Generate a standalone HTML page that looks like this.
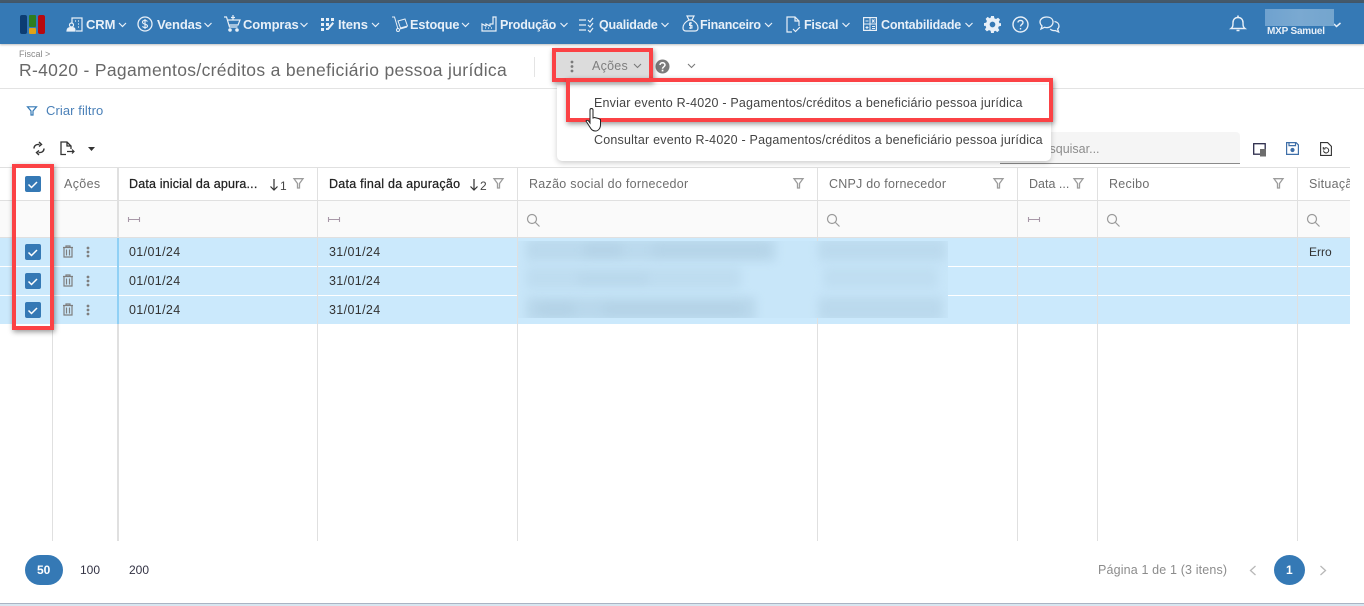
<!DOCTYPE html>
<html lang="pt-BR"><head><meta charset="utf-8"><title>R-4020</title>
<style>
*{box-sizing:border-box}
html,body{margin:0;padding:0;width:1364px;height:606px;overflow:hidden;background:#fff;font-family:"Liberation Sans",Arial,sans-serif}
.a{position:absolute}
.t{position:absolute;white-space:nowrap;line-height:16px}
.n{color:#e8f0f8;font-size:13px;font-weight:bold;top:17px;letter-spacing:-.1px}
.h{font-size:12.5px;color:#6e6e6e;top:176px;letter-spacing:.28px}
.d{font-size:12.500px;color:#333;letter-spacing:.36px}
.v{position:absolute;top:168px;height:373px;width:1px;background:#e0e0e0}
.hl{position:absolute;left:0;width:1350px;height:1px;background:#e0e0e0}
.row{position:absolute;left:0;width:1350px;height:28px;background:#cbe9fc}
.cb{position:absolute;left:25px;width:16px;height:16px;border-radius:2px;background:#3579b5}
.bl{position:absolute;background:#b0cfe3;filter:blur(5px)}
svg{position:absolute;overflow:visible}
.red{position:absolute;border:4px solid #fb4245;box-shadow:1px 2px 5px rgba(0,0,0,.4)}
</style></head><body>

<!-- top bar -->
<div class="a" style="left:0;top:0;width:1364px;height:4px;background:#44596a"></div>
<div class="a" style="left:0;top:3px;width:1364px;height:41px;background:#3579b5;box-shadow:0 1px 2px rgba(0,0,0,.25)"></div>
<!-- logo -->
<div class="a" style="left:20px;top:15px;width:7px;height:19px;background:#0c3d73;border-radius:2px"></div>
<div class="a" style="left:29px;top:15px;width:7px;height:12px;background:#2e7d1e;border-radius:1px"></div>
<div class="a" style="left:29px;top:28px;width:7px;height:6px;background:#dfa218;border-radius:1px"></div>
<div class="a" style="left:38px;top:15px;width:7px;height:19px;background:#b8090f;border-radius:2px"></div>

<!-- nav icons -->
<svg style="left:67px;top:17px" width="16" height="15" fill="none" stroke="#e8f0f8" stroke-width="1.2"><path d="M5 6V1h10v13H9M8 4h1M11 4h1M11 7h1M11 10h1"/><circle cx="4.500" cy="8" r="2"/><path d="M0 14c0-3 2-3.500 4.500-3.500S8 11 8 14z" fill="#e8f0f8"/></svg>
<svg style="left:137px;top:16px" width="16" height="16" fill="none" stroke="#e8f0f8" stroke-width="1.300"><circle cx="8" cy="8" r="7"/><path d="M10.500 5.500C9.500 4 5.500 4 5.500 6.200S10.500 8 10.500 10s-4 2-5 .3M8 3v10" stroke-width="1.100"/></svg>
<svg style="left:224px;top:15px" width="17" height="17" fill="none" stroke="#e8f0f8" stroke-width="1.200"><path d="M0 2h2.500l3 10h8M4 5h12l-2 5H5.500M9 0v5M7 2.500h4"/><circle cx="6" cy="15" r="1.200" fill="#e8f0f8"/><circle cx="13" cy="15" r="1.200" fill="#e8f0f8"/></svg>
<svg style="left:321px;top:18px" width="13" height="13" fill="#e8f0f8"><path d="M0 0h3v3H0zM5 0h3v3H5zM10 0h3v3h-3zM0 5h3v3H0zM5 5h3v3H5zM0 10h3v3H0zM5 10h1.500l5-6 1.500 1.500-5.500 6.500H5z"/></svg>
<svg style="left:392px;top:16px" width="16" height="16" fill="none" stroke="#e8f0f8" stroke-width="1"><path d="M0 1h2.500L6 13"/><circle cx="6" cy="14" r="1.500"/><path d="M6 5l7-2 2.500 7-7 2zM8 13l7-2"/></svg>
<svg style="left:481px;top:16px" width="16" height="16" fill="none" stroke="#e8f0f8" stroke-width="1.200"><path d="M1 15V8l4 2V8l4 2V8l3 0V1h3v14zM4 12h1M7 12h1M10 12h1"/></svg>
<svg style="left:579px;top:17px" width="16" height="16" fill="none" stroke="#e8f0f8" stroke-width="1.200"><path d="M0 3h7M0 8h7M0 13h7M9 3l2 2 3-4M9 8l2 2 3-4M9 13l2 2 3-4"/></svg>
<svg style="left:682px;top:15px" width="17" height="17" fill="none" stroke="#e8f0f8" stroke-width="1.200"><path d="M5 1h7l-2 4H7zM7 5C3 7 1 10 1 13c0 2 1 3 3 3h9c2 0 3-1 3-3 0-3-2-6-6-8"/><path d="M10 8H7.500v2.500H10V13H7M8.700 7v7" stroke-width="1"/></svg>
<svg style="left:786px;top:16px" width="15" height="17" fill="none" stroke="#e8f0f8" stroke-width="1.200"><path d="M6 16H1V1h8l4 4v5M9 1v4h4M7 13l2.500 2.500L14 11"/></svg>
<svg style="left:863px;top:17px" width="14" height="14" fill="none" stroke="#e8f0f8" stroke-width="1.200"><rect x=".6" y=".6" width="12.800" height="12.800"/><path d="M.6 7h12.800M7 .6v12.800M2.500 4h3M9 2.500l2.500 3M11.500 2.500l-2.500 3M2.500 10.500h3M4 9v3M9 9.500h3M9 11.500h3" stroke-width="1"/></svg>

<!-- nav text -->
<span class="t n" style="left:86px">CRM</span>
<span class="t n" style="left:157px">Vendas</span>
<span class="t n" style="left:243px">Compras</span>
<span class="t n" style="left:338px">Itens</span>
<span class="t n" style="left:410px;font-size:12.700px">Estoque</span>
<span class="t n" style="left:500px;font-size:12.500px;letter-spacing:-.2px">Produção</span>
<span class="t n" style="left:599px;font-size:12.500px;letter-spacing:-.2px">Qualidade</span>
<span class="t n" style="left:700px;font-size:12.500px;letter-spacing:-.25px">Financeiro</span>
<span class="t n" style="left:804px;font-size:12.500px;letter-spacing:-.2px">Fiscal</span>
<span class="t n" style="left:881px;font-size:12.500px;letter-spacing:-.2px">Contabilidade</span>

<!-- nav chevrons -->
<svg style="left:0;top:0" width="1364" height="44" fill="none" stroke="#e8f0f8" stroke-width="1.200">
<path d="M119 23l3.500 3.500L126 23M204.500 23l3.500 3.500L211.500 23M300.500 23l3.500 3.500L307.500 23M372 23l3.500 3.500L379 23M462 23l3.500 3.500L469 23M560.500 23l3.500 3.500L567.500 23M661.500 23l3.500 3.500L668.500 23M765 23l3.500 3.500L772 23M842.500 23l3.500 3.500L849.500 23M965.500 23l3.500 3.500L972.500 23"/>
<path d="M1334 24l2.500 2.500L1340.500 23" stroke-width="1.500"/>
</svg>

<!-- gear, help, chat -->
<svg style="left:984px;top:16px" width="17" height="17" viewBox="0 0 24 24" fill="#e8f0f8"><path fill-rule="evenodd" d="M10 0h4l.7 3.300 2.300 1 2.900-1.800 2.800 2.800L20.900 8l1 2.300L24 10v4l-3.100.7-1 2.300 1.800 2.900-2.800 2.800L16 20.900l-2 1L14 24h-4l-.7-3.100-2.300-1-2.900 1.800-2.800-2.800L3.100 16l-1-2.300L0 14v-4l3.100-.7 1-2.300-1.800-2.900 2.800-2.800L8 3.100l1.300-.6zM12 8a4 4 0 1 0 0 8 4 4 0 0 0 0-8z"/></svg>
<svg style="left:1012px;top:16px" width="17" height="17" fill="none" stroke="#e8f0f8" stroke-width="1.400"><circle cx="8.500" cy="8.500" r="7.500"/><path d="M6 6.500C6 3.800 11 3.800 11 6.500 11 8.500 8.500 8.300 8.500 10.500"/><path d="M8.500 12v1.500"/></svg>
<svg style="left:1039px;top:16px" width="21" height="17" fill="none" stroke="#e8f0f8" stroke-width="1.300"><path d="M7.500 1C3.500 1 1 3.300 1 6c0 1.700 1 3 2 4l-1 3 3.500-1.700c.6.200 1.300.300 2 .300 4 0 6.500-2.500 6.500-5.600S11.500 1 7.500 1z"/><path d="M15.500 5.500c2.700.4 4.500 2.200 4.500 4.500 0 1.200-.5 2.200-1.400 3l1 3-3.400-1.500c-2 .3-4-.3-5-1.500"/></svg>
<!-- bell -->
<svg style="left:1230px;top:15px" width="16" height="18" fill="none" stroke="#e8f0f8" stroke-width="1.400"><path d="M1 13.500h14c-2-1.500-2-3-2-6 0-3-2-5-5-5s-5 2-5 5c0 3 0 4.500-2 6z"/><path d="M8 .5v2M6.500 15.500h3" stroke-width="1.600"/></svg>
<!-- user -->
<div class="a" style="left:1265px;top:9px;width:69px;height:17px;background:linear-gradient(90deg,#6fa2cf,#7aa9d1 50%,#74a5ce)"></div>
<span class="t" style="left:1267px;top:24px;color:#e8f0f8;font-size:10px;font-weight:bold;letter-spacing:-.2px">MXP Samuel</span>

<!-- page header -->
<span class="t" style="left:19px;top:48px;font-size:9px;color:#888;line-height:12px">Fiscal &gt;</span>
<span class="t" style="left:19px;top:59px;font-size:17.500px;color:#686868;line-height:22px;letter-spacing:.325px">R-4020 - Pagamentos/créditos a beneficiário pessoa jurídica</span>
<div class="a" style="left:534px;top:57px;width:1px;height:20px;background:#e4e4e4"></div>
<div class="a" style="left:0;top:88px;width:1364px;height:1px;background:#e3e3e3"></div>

<!-- acoes button -->
<div class="a" style="left:555px;top:52px;width:95px;height:26px;background:#dcdcdc"></div>
<svg style="left:570px;top:60px" width="4" height="13" fill="#7a7a7a"><circle cx="2" cy="2" r="1.400"/><circle cx="2" cy="6.500" r="1.400"/><circle cx="2" cy="11" r="1.400"/></svg>
<span class="t" style="left:592px;top:58px;font-size:12.500px;color:#7e7e7e;letter-spacing:.25px">Ações</span>
<svg style="left:633px;top:63px" width="9" height="6" fill="none" stroke="#7a7a7a" stroke-width="1.100"><path d="M1 1l3.500 3.500L8 1"/></svg>
<svg style="left:655px;top:59px" width="15" height="15"><circle cx="7.500" cy="7.500" r="7" fill="#7b7b7b"/><path d="M5 6c0-3 5-3 5 0 0 1.800-2.500 1.800-2.500 3.800" fill="none" stroke="#fff" stroke-width="1.500"/><rect x="6.700" y="10.700" width="1.700" height="1.700" fill="#fff"/></svg>
<svg style="left:687px;top:63px" width="9" height="6" fill="none" stroke="#7a7a7a" stroke-width="1.100"><path d="M1 1l3.500 3.500L8 1"/></svg>

<!-- filter -->
<svg style="left:27px;top:106px" width="10" height="10" fill="none" stroke="#3579b5" stroke-width="1.200"><path d="M.5.800h9L6 5v4H4V5z"/></svg>
<span class="t" style="left:46px;top:103px;font-size:13px;color:#4a80b8;letter-spacing:.08px">Criar filtro</span>

<!-- toolbar -->
<svg style="left:33px;top:141px" width="12" height="15" fill="none" stroke="#333" stroke-width="1.400"><path d="M1 7.500C1 4.500 3.500 3 6.500 3.500M11 7.500c0 3-2.500 4.500-5.500 4M6 1l2.500 2.500L6 5.500M6 14l-2.500-2.500L6 9.500"/></svg>
<svg style="left:60px;top:141px" width="15" height="15" fill="none" stroke="#333" stroke-width="1.300"><path d="M6 13.500H1V1h6l4 4v3M7 1v4h4"/><path d="M7 10.500h7M12 8.500l2 2-2 2" stroke-width="1.200"/></svg>
<svg style="left:88px;top:147px" width="7" height="4" fill="#333"><path d="M0 0h7L3.500 4z"/></svg>

<!-- search -->
<div class="a" style="left:1000px;top:132px;width:240px;height:32px;background:#f5f5f5;border-bottom:1px solid #8a8a8a;border-radius:4px 4px 0 0"></div>
<svg style="left:1253px;top:143px" width="14" height="14" fill="none"><rect x=".7" y=".7" width="11.500" height="10.500" stroke="#2a2a4a" stroke-width="1.300"/><rect x="7" y="6" width="6" height="7.500" fill="#6d6d6d"/></svg>
<svg style="left:1286px;top:142px" width="13" height="13" fill="none" stroke="#3f6fa8" stroke-width="1.200"><path d="M.6.600h9.500l2.300 2.300v9.500H.6zM3 .6v3h6.500v-3"/><circle cx="6.500" cy="8" r="1.500" fill="#3f6fa8"/></svg>
<svg style="left:1320px;top:142px" width="12" height="14" fill="none" stroke="#333" stroke-width="1.100"><path d="M.6.600h7l3.800 3.800v9H.6z"/><path d="M3.500 8.500a2.600 2.600 0 1 0 1-2.200M3.300 5v2h2" stroke-width="1"/></svg>

<!-- grid -->
<div class="a" style="left:0;top:201px;width:1350px;height:37px;background:#fafafa"></div>
<div class="hl" style="top:167px"></div>
<div class="hl" style="top:200px"></div>
<div class="hl" style="top:237px"></div>

<!-- rows -->
<div class="row" style="top:238px"></div>
<div class="row" style="top:267px"></div>
<div class="row" style="top:296px"></div>

<!-- vertical lines -->
<div class="v" style="left:52px"></div>
<div class="v" style="left:117px;width:2px"></div>
<div class="a" style="left:117px;top:238px;width:2px;height:86px;background:#90d0f5"></div>
<div class="v" style="left:317px"></div>
<div class="v" style="left:517px"></div>
<div class="v" style="left:817px"></div>
<div class="v" style="left:1017px"></div>
<div class="v" style="left:1097px"></div>
<div class="v" style="left:1297px"></div>

<!-- blurred data -->
<div class="a" style="left:518px;top:241px;width:430px;height:77px;overflow:hidden;background:#c8e6f9">
  <div class="bl" style="left:8px;top:-2px;width:250px;height:22px;opacity:.55"></div>
  <div class="bl" style="left:8px;top:26px;width:215px;height:22px;opacity:.4"></div>
  <div class="bl" style="left:8px;top:56px;width:230px;height:24px;opacity:.6"></div>
  <div class="bl" style="left:300px;top:-2px;width:128px;height:22px;opacity:.5"></div>
  <div class="bl" style="left:305px;top:26px;width:115px;height:22px;opacity:.35"></div>
  <div class="bl" style="left:300px;top:56px;width:125px;height:24px;opacity:.55"></div>
  <div class="bl" style="left:66px;top:3px;width:38px;height:12px;opacity:.6"></div>
  <div class="bl" style="left:135px;top:3px;width:115px;height:12px;opacity:.5"></div>
  <div class="bl" style="left:60px;top:33px;width:70px;height:10px;opacity:.4"></div>
  <div class="bl" style="left:20px;top:62px;width:36px;height:13px;opacity:.6"></div>
  <div class="bl" style="left:85px;top:62px;width:140px;height:13px;opacity:.5"></div>
</div>

<!-- checkboxes -->
<div class="cb" style="top:176px"></div>
<div class="cb" style="top:244px"></div>
<div class="cb" style="top:273px"></div>
<div class="cb" style="top:302px"></div>
<svg style="left:0;top:0" width="60" height="330" fill="none" stroke="#fff" stroke-width="1.500"><path d="M28.500 184.500l3 3 5.500-5.500M28.500 252.500l3 3 5.500-5.500M28.500 281.500l3 3 5.500-5.500M28.500 310.500l3 3 5.500-5.500"/></svg>

<!-- header text -->
<span class="t h" style="left:64px;letter-spacing:.36px">Ações</span>
<span class="t h" style="left:129px;color:#222;letter-spacing:.17px;-webkit-text-stroke:.25px #222">Data inicial da apura...</span>
<span class="t h" style="left:329px;color:#222;letter-spacing:.25px;-webkit-text-stroke:.25px #222">Data final da apuração</span>
<span class="t h" style="left:529px">Razão social do fornecedor</span>
<span class="t h" style="left:829px;letter-spacing:.22px">CNPJ do fornecedor</span>
<span class="t h" style="left:1029px;letter-spacing:0">Data ...</span>
<span class="t h" style="left:1109px">Recibo</span>
<span class="a" style="left:1298px;top:168px;width:52px;height:32px;overflow:hidden"><span class="t h" style="left:11px;top:8px">Situação</span></span>

<!-- sort -->
<svg style="left:269px;top:179px" width="10" height="12" fill="none" stroke="#333" stroke-width="1.200"><path d="M5 0v11M1.500 7.500L5 11l3.500-3.500"/></svg>
<span class="t" style="left:280px;top:178px;font-size:12px;color:#444">1</span>
<svg style="left:469px;top:179px" width="10" height="12" fill="none" stroke="#333" stroke-width="1.200"><path d="M5 0v11M1.500 7.500L5 11l3.500-3.500"/></svg>
<span class="t" style="left:480px;top:178px;font-size:12px;color:#444">2</span>

<!-- column filter icons -->
<svg style="left:0;top:0" width="1364" height="240" fill="none" stroke="#9c9c9c" stroke-width="1.300">
<path d="M294 178.700h9l-3.500 4.800v4.500h-2v-4.500zM494 178.700h9l-3.500 4.800v4.500h-2v-4.500zM794 178.700h9l-3.500 4.800v4.500h-2v-4.500zM994 178.700h9l-3.500 4.800v4.500h-2v-4.500zM1074 178.700h9l-3.500 4.800v4.500h-2v-4.500zM1274 178.700h9l-3.500 4.800v4.500h-2v-4.500z"/>
<g stroke="#a898a8" stroke-width="1.100"><path d="M128.500 217v5M128.500 219.500h11M139.500 217v5M328.500 217v5M328.500 219.500h11M339.500 217v5M1028.500 217v5M1028.500 219.500h11M1039.500 217v5"/></g>
<g stroke="#9a9a9a" stroke-width="1.200"><circle cx="532" cy="219" r="4.500"/><path d="M535.500 222.500l4 4"/><circle cx="832" cy="219" r="4.500"/><path d="M835.500 222.500l4 4"/><circle cx="1112" cy="219" r="4.500"/><path d="M1115.500 222.500l4 4"/><circle cx="1312" cy="219" r="4.500"/><path d="M1315.500 222.500l4 4"/></g>
</svg>

<!-- row content -->
<span class="t d" style="left:129px;top:244px">01/01/24</span>
<span class="t d" style="left:129px;top:273px">01/01/24</span>
<span class="t d" style="left:129px;top:302px">01/01/24</span>
<span class="t d" style="left:329px;top:244px">31/01/24</span>
<span class="t d" style="left:329px;top:273px">31/01/24</span>
<span class="t d" style="left:329px;top:302px">31/01/24</span>
<span class="t d" style="left:1309px;top:244px;font-size:12px;letter-spacing:0">Erro</span>

<!-- row actions -->
<svg style="left:0;top:0" width="100" height="330" fill="none" stroke="#7e7e7e" stroke-width="1.200">
<path d="M63 247.500h10M64 247.500v9.500h8v-9.500M66.500 249.500v6M69.500 249.500v6M66 247v-1h4v1"/>
<path d="M63 276.500h10M64 276.500v9.500h8v-9.500M66.500 278.500v6M69.500 278.500v6M66 276v-1h4v1"/>
<path d="M63 305.500h10M64 305.500v9.500h8v-9.500M66.500 307.500v6M69.500 307.500v6M66 305v-1h4v1"/>
<g fill="#7e7e7e" stroke="none"><circle cx="88" cy="248" r="1.400"/><circle cx="88" cy="252" r="1.400"/><circle cx="88" cy="256" r="1.400"/><circle cx="88" cy="277" r="1.400"/><circle cx="88" cy="281" r="1.400"/><circle cx="88" cy="285" r="1.400"/><circle cx="88" cy="306" r="1.400"/><circle cx="88" cy="310" r="1.400"/><circle cx="88" cy="314" r="1.400"/></g>
</svg>

<!-- search placeholder -->
<span class="t" style="left:1049.500px;top:141px;font-size:12.500px;color:#8c8c8c">squisar...</span>

<!-- dropdown -->
<div class="a" style="left:557px;top:85px;width:494px;height:76px;background:#fff;border-radius:0 0 5px 5px;box-shadow:0 2px 6px rgba(0,0,0,.2)"></div>
<span class="t" style="left:594px;top:95px;font-size:12.500px;color:#444;letter-spacing:.19px">Enviar evento R-4020 - Pagamentos/créditos a beneficiário pessoa jurídica</span>
<span class="t" style="left:594px;top:132px;font-size:12.500px;color:#444;letter-spacing:.21px">Consultar evento R-4020 - Pagamentos/créditos a beneficiário pessoa jurídica</span>

<!-- red highlights -->
<div class="red" style="left:552px;top:48px;width:101px;height:34px"></div>
<div class="red" style="left:566px;top:78px;width:487px;height:44px"></div>
<div class="red" style="left:12px;top:164px;width:42px;height:166px"></div>

<!-- cursor -->
<svg style="left:585px;top:108px" width="18" height="24" fill="#fff" stroke="#222" stroke-width="1"><path d="M5 2c0-2 3-2 3 0v8l1.500-.5 2 .5 2 .5 2 1V17c0 3-2 6-5 6-2.500 0-4-1-5-3L1 13c.5-1 2-1 3 .5L5 15z"/></svg>

<!-- footer -->
<div class="a" style="left:25px;top:555px;width:38px;height:30px;border-radius:15px;background:#3579b5"></div>
<span class="t" style="left:37px;top:562px;font-size:12px;font-weight:bold;color:#fff">50</span>
<span class="t" style="left:80px;top:562px;font-size:12px;color:#334">100</span>
<span class="t" style="left:129px;top:562px;font-size:12px;color:#334">200</span>
<span class="t" style="left:1098px;top:562px;font-size:12.500px;color:#8c8c8c;letter-spacing:.15px">Página 1 de 1 (3 itens)</span>
<svg style="left:1249px;top:565px" width="8" height="11" fill="none" stroke="#b8b8b8" stroke-width="1.300"><path d="M6.500 1L1.500 5.500 6.500 10"/></svg>
<div class="a" style="left:1274px;top:555px;width:31px;height:30px;border-radius:50%;background:#3579b5"></div>
<span class="t" style="left:1286px;top:562px;font-size:12px;font-weight:bold;color:#fff">1</span>
<svg style="left:1319px;top:565px" width="8" height="11" fill="none" stroke="#b8b8b8" stroke-width="1.300"><path d="M1.500 1l5 4.500-5 4.500"/></svg>

<div class="a" style="left:0;top:603px;width:1364px;height:1px;background:#aab4c4"></div>
<div class="a" style="left:0;top:604px;width:1364px;height:2px;background:#d8e6f0"></div>
</body></html>
